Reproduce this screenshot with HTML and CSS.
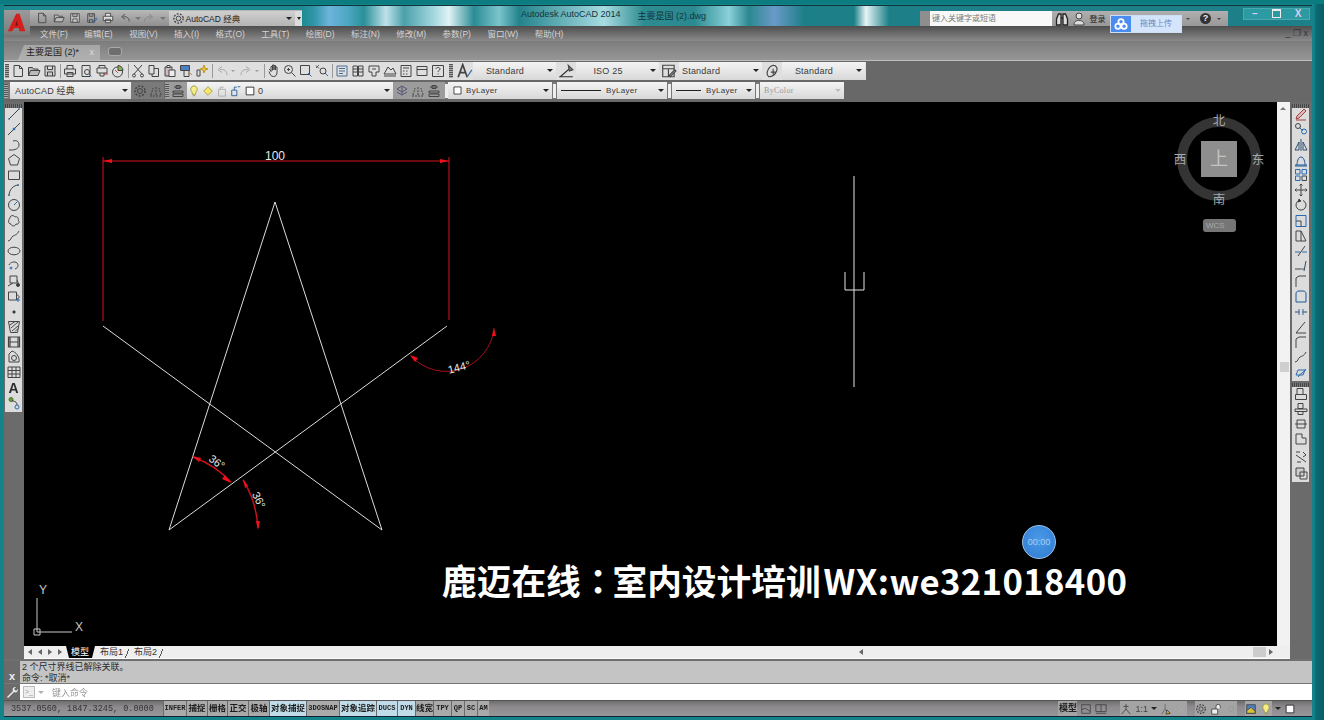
FILE: index.html
```html
<!DOCTYPE html>
<html lang="zh-CN">
<head>
    <meta charset="UTF-8">
    <title>AutoCAD 2014</title>
    <link rel="stylesheet" href="styles.css">
</head>
<body>
    <svg class="sprite" width="0" height="0">
        <defs>
            <symbol id="new" viewBox="0 0 14 14"><path d="M3 1.500h5.500l3 3v8h-8.500z M8.500 1.500v3h3"/></symbol>
            <symbol id="open" viewBox="0 0 14 14"><path d="M1.500 11.500v-8h4l1 1.500h4.500v1.500 M1.500 11.500l2-5h9.500l-2 5z" fill="#bbb"/></symbol>
            <symbol id="save" viewBox="0 0 14 14"><path d="M2 2h10v10h-10z M4.500 2v3.500h5v-3.500 M4.500 12v-4h5v4" fill="#ccc"/></symbol>
            <symbol id="saveas" viewBox="0 0 14 14"><path d="M2 2h8v10h-8z M4 2v3h4v-3 M4 12v-3h4v3"/><path d="M8 11l4-4 1 1-4 4z" stroke="#2a6ab0"/></symbol>
            <symbol id="print" viewBox="0 0 14 14"><path d="M4 5v-3.500h6v3.500 M1.500 5h11v5h-11z M4 8.500h6v4h-6z" fill="#ddd"/></symbol>
            <symbol id="preview" viewBox="0 0 14 14"><path d="M3 1.500h8v11h-8z"/><circle cx="8" cy="8" r="2.500"/><path d="M10 10l2.500 2.500" stroke="#2a6ab0"/></symbol>
            <symbol id="plot" viewBox="0 0 14 14"><path d="M4 4v-2.500h6v2.500 M2 4h10v5h-10z M5 9v3h4v-3"/><path d="M9 10h4" stroke="#b33"/></symbol>
            <symbol id="publish" viewBox="0 0 14 14"><circle cx="6.500" cy="8" r="5"/><path d="M7 1.500a5 5 0 0 1 5 5h-5z" fill="#8db04a"/><path d="M4 6l3 3" stroke="#c44"/></symbol>
            <symbol id="cut" viewBox="0 0 14 14"><path d="M3 1l8 9 M11 1l-8 9"/><circle cx="3" cy="11.500" r="1.500"/><circle cx="11" cy="11.500" r="1.500"/></symbol>
            <symbol id="copy" viewBox="0 0 14 14"><path d="M2 1.500h5v8.500h-5z M7 4.500h4.500v8h-6.500v-2.500"/></symbol>
            <symbol id="paste" viewBox="0 0 14 14"><path d="M2 3h7v9h-7z" fill="#cbb"/><path d="M4 1.500h3v2h-3z M6 6h6v6.500h-6z" fill="#eee"/></symbol>
            <symbol id="match" viewBox="0 0 14 14"><path d="M1.500 1.500h9v5h-9z" fill="#4a7fc0"/><path d="M5 6.500h5v6h-5z" fill="#ddd"/><path d="M10 8l3 3" stroke="#d48a1c"/></symbol>
            <symbol id="spark" viewBox="0 0 14 14"><path d="M2 6v6h3v-6z"/><path d="M9 1l1 3 3 1-3 1-1 3-1-3-3-1 3-1z" fill="#e8c23a" stroke="#c09a20"/></symbol>
            <symbol id="undo" viewBox="0 0 14 14"><path d="M12 11c0-4-3-6-7-5.500 M7 2.500l-4 3 4 3"/></symbol>
            <symbol id="redo" viewBox="0 0 14 14"><path d="M2 11c0-4 3-6 7-5.500 M7 2.500l4 3-4 3"/></symbol>
            <symbol id="hand" viewBox="0 0 14 14"><path d="M4 7l-2-2 M4 8v-5.500h1.500v4 M5.500 6v-5h1.500v5 M7 6v-4.500h1.500v4.500 M8.500 6v-3h1.500v5c0 3-1 4.500-3.500 4.500s-3-1.500-4.500-5"/></symbol>
            <symbol id="zoom" viewBox="0 0 14 14"><circle cx="5.500" cy="5.500" r="4"/><path d="M8.500 8.500l4 4 M4 5.500h3 M5.500 4v3"/></symbol>
            <symbol id="zoomwin" viewBox="0 0 14 14"><path d="M1.500 1.500h9v9h-9z"/><path d="M9 9l3.500 3.500" stroke="#2a6ab0"/></symbol>
            <symbol id="zoomprev" viewBox="0 0 14 14"><path d="M1 4l3-3 M1 1.500l3 3" stroke="#555"/><circle cx="8" cy="7" r="3"/><path d="M10 9l3 3" stroke="#2a6ab0"/></symbol>
            <symbol id="props" viewBox="0 0 14 14"><path d="M2 2h10v10h-10z M4 4.500h6 M4 7h6 M4 9.500h4" stroke="#4a6f90"/></symbol>
            <symbol id="grid2" viewBox="0 0 14 14"><path d="M2 2h4.500v10h-4.500z M7.500 2h4.500v10h-4.500z M2 5h4.500 M2 8h4.500 M7.500 5h4.500 M7.500 8h4.500"/></symbol>
            <symbol id="palette" viewBox="0 0 14 14"><path d="M2 2h10v6h-3v4h-4v-4h-3z M5 5h4"/></symbol>
            <symbol id="sheet" viewBox="0 0 14 14"><path d="M1 10l4-7 3 3 2-2 3 6z" fill="#ddd"/><path d="M1 12h12"/></symbol>
            <symbol id="calc" viewBox="0 0 14 14"><path d="M2 1.500h10v11h-10z M4 4h6 M4 7h1.500 M7 7h1.500 M4 10h1.500 M7 10h1.500"/></symbol>
            <symbol id="box" viewBox="0 0 14 14"><path d="M2 2.500h10v9h-10z M2 5.500h10"/></symbol>
            <symbol id="help" viewBox="0 0 14 14"><path d="M1.500 1.500h11v11h-11z M5 5c0-2 4-2 4 0 0 1.500-2 1.500-2 3 M7 9.500v1"/></symbol>
            <symbol id="textstyle" viewBox="0 0 14 14"><path d="M1 12.500l4-11 4 11 M2.500 8.500h5" stroke-width="1.500"/><path d="M9 12l4-6" stroke="#2a6ab0"/></symbol>
            <symbol id="dimstyle" viewBox="0 0 14 14"><path d="M1 12h12 M2 12l8-7" stroke="#333"/><path d="M9 2l4 4-3 1z" fill="#888"/></symbol>
            <symbol id="tablestyle" viewBox="0 0 14 14"><path d="M1.500 2h10v10h-10z M1.500 5h10 M6.500 5v7"/><path d="M7 11l5-5 1 1-5 5z" fill="#ddd"/></symbol>
            <symbol id="mlstyle" viewBox="0 0 14 14"><path d="M4 12c-3-3 0-9 4-10 3 0 4 3 3 5-1 3-4 5-7 5z M8 5v5 M6 8h4"/></symbol>
            <symbol id="gear" viewBox="0 0 14 14"><circle cx="7" cy="7" r="2.500"/><circle cx="7" cy="7" r="5" stroke-dasharray="2 1.500" stroke-width="1.500"/></symbol>
            <symbol id="wsp" viewBox="0 0 14 14"><path d="M2 11c0-3 2-4 2-7 M7 11c0-3 0-5 0-8 M12 11c0-3-2-4-2-7 M1 12h12" stroke-dasharray="2 1"/></symbol>
            <symbol id="laystate" viewBox="0 0 14 14"><path d="M3 3h8 M5 1.500h4v3h-4z M2 7h10v2h-10z M2 10h10v2.500h-10z"/></symbol>
            <symbol id="bulb" viewBox="0 0 14 14"><path d="M7 1a4 4 0 0 0-2.500 7l1 3h3l1-3a4 4 0 0 0-2.500-7z M5.500 12.500h3" fill="#f3ec88" stroke="#9a9a40"/></symbol>
            <symbol id="sun" viewBox="0 0 14 14"><path d="M7 2l5 5-5 5-5-5z" fill="#f3e66a" stroke="#a09a40"/></symbol>
            <symbol id="lockp" viewBox="0 0 14 14"><path d="M3 5h8v8h-8z M5 5v-2.500h4" stroke="#aaa"/></symbol>
            <symbol id="lineblue" viewBox="0 0 14 14"><path d="M2 6h6v6.500h-6z M5 6v-3.500h3 M9 2h3" stroke="#1c5a9a"/></symbol>
            <symbol id="square" viewBox="0 0 14 14"><path d="M2.500 2.500h9v9h-9z" fill="#fff" stroke="#222"/></symbol>
            <symbol id="layset" viewBox="0 0 14 14"><path d="M2 5l5-3 5 3-5 3z M2 8l5 3 5-3 M7 2v9" stroke="#557"/></symbol>
            <symbol id="line" viewBox="0 0 14 14"><path d="M2 12l10-10"/><path d="M2 11v2 M12 1v2" stroke="#2a6ab0"/></symbol>
            <symbol id="xline" viewBox="0 0 14 14"><path d="M1 13l12-12"/><circle cx="7" cy="7" r="1" fill="#2a6ab0" stroke="#2a6ab0"/></symbol>
            <symbol id="pline" viewBox="0 0 14 14"><path d="M2 12h3c2 0 7-1 7-5s-3-5-6-4"/></symbol>
            <symbol id="polygon" viewBox="0 0 14 14"><path d="M7 1.500l5.500 4-2 6.500h-7l-2-6.500z"/></symbol>
            <symbol id="rect" viewBox="0 0 14 14"><path d="M1.500 3h11v8.500h-11z"/></symbol>
            <symbol id="arc" viewBox="0 0 14 14"><path d="M2 13c0-6 4-11 10-11"/><path d="M1 12h2 M11 1v2" stroke="#2a6ab0"/></symbol>
            <symbol id="circle" viewBox="0 0 14 14"><circle cx="7" cy="7" r="5.500"/><path d="M7 7l3-3" stroke="#2a6ab0"/></symbol>
            <symbol id="cloud" viewBox="0 0 14 14"><path d="M3 4c0-3 4-3 5-1 2-1 4 1 3 3 2 1 1 5-2 4-1 3-5 2-5 0-3 0-3-4-1-6z"/></symbol>
            <symbol id="spline" viewBox="0 0 14 14"><path d="M1 12c3 0 3-4 5-5s4-1 6-5"/></symbol>
            <symbol id="ellipse" viewBox="0 0 14 14"><ellipse cx="7" cy="7" rx="6" ry="3.800"/></symbol>
            <symbol id="ellarc" viewBox="0 0 14 14"><path d="M2 6c1-3 6-4 8-2 2 2 1 5-2 6"/><circle cx="4" cy="9" r="1" stroke="#2a6ab0"/></symbol>
            <symbol id="insert" viewBox="0 0 14 14"><path d="M3 2h7v7h-7z M10 6l2 5 M1 12l5-3"/><circle cx="11" cy="11" r="1.500" fill="#333"/></symbol>
            <symbol id="block" viewBox="0 0 14 14"><path d="M1.500 3h8v8h-8z M9.500 5l3 3-3 3"/><circle cx="11" cy="11" r="1.200" stroke="#2a6ab0"/></symbol>
            <symbol id="point" viewBox="0 0 14 14"><path d="M6 6h2v2h-2z" fill="#333"/></symbol>
            <symbol id="hatch" viewBox="0 0 14 14"><path d="M1.500 1.500h11l-2 11h-7z M3 5l5-3.500 M4 8l7-6 M5 11l6-5 M8 11.500l3-3"/></symbol>
            <symbol id="gradient" viewBox="0 0 14 14"><path d="M1.500 2h11v10h-11z M3 2v10 M11 2v10 M3 7h8" stroke-width="1.200"/></symbol>
            <symbol id="region" viewBox="0 0 14 14"><path d="M2 12v-8l3-3c4 1 8 6 7 11z"/><circle cx="7" cy="8" r="2.500"/></symbol>
            <symbol id="table" viewBox="0 0 14 14"><path d="M1 2h12v10.500h-12z M1 5.500h12 M1 9h12 M5 2v10.500 M9 2v10.500"/></symbol>
            <symbol id="addsel" viewBox="0 0 14 14"><circle cx="4" cy="3.500" r="2" fill="#6a9a3a" stroke="#4a7a2a"/><path d="M5 5c4 0 5 2 5 4" stroke="#333"/><circle cx="10" cy="11" r="2" stroke="#2a6ab0"/></symbol>
            <symbol id="erase" viewBox="0 0 14 14"><path d="M2 12l1-3 7-7 2 2-7 7z" fill="#e0b8b8" stroke="#a04040"/><path d="M2 13h10" stroke="#a04040"/></symbol>
            <symbol id="mcopy" viewBox="0 0 14 14"><circle cx="4" cy="4" r="2.500"/><circle cx="10" cy="9.500" r="2.500" stroke="#2a6ab0"/><path d="M5 5l4 4" stroke="#2a6ab0"/></symbol>
            <symbol id="mirror" viewBox="0 0 14 14"><path d="M7 1v12 M5 4v8h-4z M9 4v8h4z" stroke="#2f4f70"/></symbol>
            <symbol id="offset" viewBox="0 0 14 14"><path d="M1 12h12 M3 12c0-3 1-8 4-8s4 5 4 8" stroke="#1c5a9a"/><path d="M1 13h12" stroke="#1c5a9a"/></symbol>
            <symbol id="array" viewBox="0 0 14 14"><path d="M1.500 1.500h4.500v4.500h-4.500z M8 1.500h4.500v4.500h-4.500z M1.500 8h4.500v4.500h-4.500z" stroke="#2a6ab0"/><path d="M8 8h4.500v4.500h-4.500z"/></symbol>
            <symbol id="move" viewBox="0 0 14 14"><path d="M7 1v12 M1 7h12 M5.500 2.500l1.500-1.500 1.500 1.500 M5.500 11.500l1.500 1.500 1.500-1.500 M2.500 5.500l-1.500 1.500 1.500 1.500 M11.500 5.500l1.500 1.500-1.500 1.500"/></symbol>
            <symbol id="rotate" viewBox="0 0 14 14"><path d="M9 2.500a5 5 0 1 1-4 0"/><path d="M5 1l2 2-3 1z" fill="#333"/></symbol>
            <symbol id="scale" viewBox="0 0 14 14"><path d="M2 1.500h10v11h-10z" stroke="#2a6ab0"/><path d="M2 7h5v5.500"/></symbol>
            <symbol id="stretch" viewBox="0 0 14 14"><path d="M2 2h5l5 10h-10z M7 2v10"/></symbol>
            <symbol id="trim" viewBox="0 0 14 14"><path d="M1 8h5 M8 8h5" stroke="#2a6ab0"/><path d="M11 2l-7 10"/></symbol>
            <symbol id="extend" viewBox="0 0 14 14"><path d="M1 10h6"/><path d="M7 10h3" stroke="#2a6ab0"/><path d="M12 2l-2 10"/></symbol>
            <symbol id="chamfer" viewBox="0 0 14 14"><path d="M2 13v-9l3-2h7"/></symbol>
            <symbol id="bcorner" viewBox="0 0 14 14"><path d="M2 13v-8c0-2 1-3 3-3h4c2 0 3 1 3 3v8h-10" stroke="#1c5a9a"/></symbol>
            <symbol id="breakp" viewBox="0 0 14 14"><path d="M1 7h4.500 M8.500 7h4.500"/><path d="M5 4v6 M9 4v6" stroke="#2a6ab0"/></symbol>
            <symbol id="fillet" viewBox="0 0 14 14"><path d="M2 13l9-11 M2 13h10"/></symbol>
            <symbol id="explode" viewBox="0 0 14 14"><path d="M2 10l2-5h7l-2 5z" stroke="#2a6ab0"/><path d="M4 12c2-4 6-4 8-8" stroke="#2a6ab0"/></symbol>
            <symbol id="draw1" viewBox="0 0 14 14"><path d="M3 1.500h6v6h-6z M1.500 7.500h11v5h-11z"/></symbol>
            <symbol id="draw2" viewBox="0 0 14 14"><path d="M4 1.500h5v5h-5z M1 7h12v2.500h-12z M4 9.500h5v3h-5z"/></symbol>
            <symbol id="draw3" viewBox="0 0 14 14"><path d="M1 7h12 M3 3h8v8h-8z"/></symbol>
            <symbol id="draw4" viewBox="0 0 14 14"><path d="M2 2h6v4h4v6h-10z" fill="#ddd"/></symbol>
            <symbol id="draw5" viewBox="0 0 14 14"><path d="M2 2h4 M2 5l10 7 M9 2l3 3-3 2 M3 12h4"/></symbol>
            <symbol id="draw6" viewBox="0 0 14 14"><path d="M2 2h8v8h-8z" fill="#ccc"/><path d="M6 6h7v7h-7z"/></symbol>
            <symbol id="binoc" viewBox="0 0 14 14"><path d="M1.500 13v-6l2-5h2.500v11z M12.500 13v-6l-2-5h-2.500v11z M6 6h2" fill="#ddd" stroke="#222" stroke-width="1.300"/></symbol>
            <symbol id="user" viewBox="0 0 14 14"><circle cx="7" cy="4" r="3" fill="#ddd"/><path d="M2 13c0-4 3-4.500 5-4.500s5 .5 5 4.500z" fill="#ddd"/></symbol>
            <symbol id="cloudlogo" viewBox="0 0 16 16"><circle cx="8" cy="5.500" r="3" stroke="#fff" stroke-width="2"/><circle cx="4.500" cy="10.500" r="3" stroke="#fff" stroke-width="2"/><circle cx="11.500" cy="10.500" r="3" stroke="#fff" stroke-width="2"/></symbol>
            <symbol id="pan" viewBox="0 0 14 14"><path d="M2 2h10v10h-10z M2 8l4-2 6 4"/></symbol>
            <symbol id="twopanes" viewBox="0 0 14 14"><path d="M1 2h12v8h-12z M7 2v8 M1 12h12"/></symbol>
            <symbol id="anno" viewBox="0 0 14 14"><path d="M7 1v6 M7 7l-5 6 M7 7l5 6 M4 4h6"/></symbol>
            <symbol id="annoon" viewBox="0 0 14 14"><path d="M6 1v6 M6 7l-4 6 M6 7l4 6" stroke="#666"/><path d="M8 8l4 4-5 1z" fill="#e0a030"/></symbol>
            <symbol id="annooff" viewBox="0 0 14 14"><path d="M3 3l8 8 M11 3l-8 8" stroke="#aaa"/></symbol>
            <symbol id="lockopen" viewBox="0 0 14 14"><path d="M2 7h7v6h-7z M7 7v-3a2.500 2.500 0 0 1 5 0v2" fill="#eee"/></symbol>
            <symbol id="dot" viewBox="0 0 14 14"><circle cx="7" cy="7" r="3" stroke="#999"/></symbol>
            <symbol id="hw" viewBox="0 0 14 14"><path d="M2 2h10v10h-10z" fill="#4a7fc0"/><path d="M2 9l5-4 5 5v2h-10z" fill="#d8c23a"/></symbol>
        </defs>
    </svg>

    <div class="app">
        <header class="titlebar">
            <div class="qat">
                <div class="app-btn">
                    <svg class="app-logo" viewBox="0 0 24 24"><path d="M11 1h4l7 21h-7l-1-4h-5l-3 4h-5z" fill="#d3201e"/><path d="M12 9l-2 6h3z" fill="#6e1210"/></svg>
                </div>
                <svg class="ico"><use href="#new"/></svg>
                <svg class="ico"><use href="#open"/></svg>
                <svg class="ico"><use href="#save"/></svg>
                <svg class="ico"><use href="#saveas"/></svg>
                <svg class="ico"><use href="#print"/></svg>
                <svg class="ico"><use href="#undo"/></svg>
                <i class="caret faint"></i>
                <svg class="ico faint"><use href="#redo"/></svg>
                <i class="caret faint"></i>
                <div class="ws-combo">
                    <svg class="ico"><use href="#gear"/></svg>
                    <span class="ws-name">AutoCAD 经典</span>
                    <i class="caret"></i>
                </div>
                <div class="qat-more"><i class="caret"></i></div>
            </div>
            <div class="doc-title">
                <span>Autodesk AutoCAD 2014</span>
                <span>主要是国 (2).dwg</span>
            </div>
            <div class="infocenter">
                <div class="search-arrow"></div>
                <div class="search-box">键入关键字或短语</div>
                <svg class="ico"><use href="#binoc"/></svg>
                <svg class="ico"><use href="#user"/></svg>
                <span class="login">登录</span>
                <i class="caret"></i>
                <div class="help-btn">?</div>
                <i class="caret"></i>
            </div>
            <div class="win-btns">
                <span class="win-btn">&#8211;</span>
                <span class="win-btn restore"></span>
                <span class="win-btn">X</span>
            </div>
        </header>

        <nav class="menubar">
            <span>文件(F)</span><span>编辑(E)</span><span>视图(V)</span><span>插入(I)</span>
            <span>格式(O)</span><span>工具(T)</span><span>绘图(D)</span><span>标注(N)</span>
            <span>修改(M)</span><span>参数(P)</span><span>窗口(W)</span><span>帮助(H)</span>
            <div class="doc-btns">_ &#10064; x</div>
        </nav>

        <div class="tabbar">
            <div class="doc-tab">主要是国 (2)*<span class="tab-x">x</span></div>
            <div class="new-tab"></div>
        </div>

        <div class="toolbars">
            <div class="tool-row">
                <div class="toolbar standard">
                    <i class="grip"></i>
                    <svg class="ico"><use href="#new"/></svg>
                    <svg class="ico"><use href="#open"/></svg>
                    <svg class="ico"><use href="#save"/></svg>
                    <i class="sep"></i>
                    <svg class="ico"><use href="#print"/></svg>
                    <svg class="ico"><use href="#preview"/></svg>
                    <svg class="ico"><use href="#plot"/></svg>
                    <svg class="ico"><use href="#publish"/></svg>
                    <i class="sep"></i>
                    <svg class="ico"><use href="#cut"/></svg>
                    <svg class="ico"><use href="#copy"/></svg>
                    <svg class="ico"><use href="#paste"/></svg>
                    <svg class="ico"><use href="#match"/></svg>
                    <svg class="ico"><use href="#spark"/></svg>
                    <i class="sep"></i>
                    <svg class="ico faint"><use href="#undo"/></svg>
                    <i class="caret faint"></i>
                    <svg class="ico faint"><use href="#redo"/></svg>
                    <i class="caret faint"></i>
                    <i class="sep"></i>
                    <svg class="ico"><use href="#hand"/></svg>
                    <svg class="ico"><use href="#zoom"/></svg>
                    <svg class="ico"><use href="#zoomwin"/></svg>
                    <svg class="ico"><use href="#zoomprev"/></svg>
                    <i class="sep"></i>
                    <svg class="ico"><use href="#props"/></svg>
                    <svg class="ico"><use href="#grid2"/></svg>
                    <svg class="ico"><use href="#palette"/></svg>
                    <svg class="ico"><use href="#sheet"/></svg>
                    <svg class="ico"><use href="#calc"/></svg>
                    <svg class="ico"><use href="#box"/></svg>
                    <svg class="ico"><use href="#help"/></svg>
                </div>
                <div class="toolbar styles">
                    <i class="grip"></i>
                    <svg class="ico wide"><use href="#textstyle"/></svg>
                    <div class="combo centered w83">Standard<i class="caret"></i></div>
                    <svg class="ico wide"><use href="#dimstyle"/></svg>
                    <div class="combo centered w83">ISO 25<i class="caret"></i></div>
                    <svg class="ico wide"><use href="#tablestyle"/></svg>
                    <div class="combo w83">Standard<i class="caret"></i></div>
                    <svg class="ico wide"><use href="#mlstyle"/></svg>
                    <div class="combo centered w83">Standard<i class="caret"></i></div>
                </div>
            </div>
            <div class="tool-row second">
                <div class="toolbar ws-bar">
                    <i class="grip"></i>
                    <div class="combo ws-select">AutoCAD 经典<i class="caret"></i></div>
                    <svg class="ico"><use href="#gear"/></svg>
                    <svg class="ico"><use href="#wsp"/></svg>
                </div>
                <div class="toolbar layers">
                    <i class="grip"></i>
                    <svg class="ico"><use href="#laystate"/></svg>
                    <div class="combo layer-select">
                        <svg class="ico"><use href="#bulb"/></svg>
                        <svg class="ico"><use href="#sun"/></svg>
                        <svg class="ico"><use href="#lockp"/></svg>
                        <svg class="ico"><use href="#lineblue"/></svg>
                        <svg class="ico"><use href="#square"/></svg>
                        <span>0</span>
                        <i class="caret"></i>
                    </div>
                    <svg class="ico"><use href="#layset"/></svg>
                    <svg class="ico"><use href="#wsp"/></svg>
                    <svg class="ico"><use href="#laystate"/></svg>
                </div>
                <div class="toolbar props-bar">
                    <i class="grip"></i>
                    <div class="combo w104"><svg class="ico"><use href="#square"/></svg>ByLayer<i class="caret"></i></div>
                    <i class="grip"></i>
                    <div class="combo w110"><i class="ltype long"></i>ByLayer<i class="caret"></i></div>
                    <i class="grip"></i>
                    <div class="combo w83"><i class="ltype"></i>ByLayer<i class="caret"></i></div>
                    <i class="grip"></i>
                    <div class="combo w84 disabled">ByColor<i class="caret"></i></div>
                </div>
            </div>
        </div>

        <main class="workspace">
            <aside class="rail">
                <div class="vbar">
                    <i class="grip-h"></i>
                    <svg class="ico"><use href="#line"/></svg>
                    <svg class="ico"><use href="#xline"/></svg>
                    <svg class="ico"><use href="#pline"/></svg>
                    <svg class="ico"><use href="#polygon"/></svg>
                    <svg class="ico"><use href="#rect"/></svg>
                    <svg class="ico"><use href="#arc"/></svg>
                    <svg class="ico"><use href="#circle"/></svg>
                    <svg class="ico"><use href="#cloud"/></svg>
                    <svg class="ico"><use href="#spline"/></svg>
                    <svg class="ico"><use href="#ellipse"/></svg>
                    <svg class="ico"><use href="#ellarc"/></svg>
                    <svg class="ico"><use href="#insert"/></svg>
                    <svg class="ico"><use href="#block"/></svg>
                    <svg class="ico"><use href="#point"/></svg>
                    <svg class="ico"><use href="#hatch"/></svg>
                    <svg class="ico"><use href="#gradient"/></svg>
                    <svg class="ico"><use href="#region"/></svg>
                    <svg class="ico"><use href="#table"/></svg>
                    <span class="a-tool">A</span>
                    <svg class="ico"><use href="#addsel"/></svg>
                </div>
            </aside>

            <section class="center">
                <div class="view-row">
                    <div class="canvas">
                        <svg class="drawing" viewBox="24 102 1253 544">
                            <g class="dim">
                                <path d="M103 157V321 M449 157V320 M103 161H449"/>
                                <path d="M103 161l9-2v4z M449 161l-9-2v4z" class="dim-head"/>
                            </g>
                            <text x="275" y="160" class="label" text-anchor="middle">100</text>

                            <path class="star" d="M275 202L169 530 M275 202L382 530 M103 326L382 530 M447 326L169 530"/>

                            <path class="dim-arc" d="M411 356A48 48 0 0 0 494 328"/>
                            <path class="dim-head" d="M410 355l8 3-3 4z M494 328l-2 8 4 0z"/>
                            <text x="459" y="371" class="label small" text-anchor="middle" transform="rotate(-14 459 367)">144°</text>

                            <path class="dim-arc bright" d="M193 457Q215 465 231 482 M243 480Q256 500 258 528"/>
                            <path class="dim-head" d="M192 456l9 2-2 4z M231 483l-6-8-3 4z M243 479l2 9 3-2z M258 530l-2-9 4 0z"/>
                            <text x="217" y="466" class="label small" text-anchor="middle" transform="rotate(36 217 462)">36°</text>
                            <text x="259" y="504" class="label small" text-anchor="middle" transform="rotate(64 259 500)">36°</text>

                            <path class="cursor" d="M854 176V387 M845 272V290H864V272"/>

                            <circle class="ring" cx="1219" cy="159" r="37"/>
                            <rect class="cube" x="1201" y="141" width="36" height="36"/>
                            <text x="1219" y="165" class="cube-face" text-anchor="middle">上</text>
                            <text x="1219" y="125" class="compass" text-anchor="middle">北</text>
                            <text x="1219" y="204" class="compass" text-anchor="middle">南</text>
                            <text x="1180" y="164" class="compass" text-anchor="middle">西</text>
                            <text x="1258" y="164" class="compass" text-anchor="middle">东</text>
                            <rect class="wcs" x="1203" y="219" width="33" height="13" rx="3"/>
                            <text x="1206" y="228" class="wcs-text">WCS</text>

                            <path class="ucs" d="M37 598V632H72 M34 629h6v6h-6z"/>
                            <text x="39" y="594" class="ucs-text">Y</text>
                            <text x="75" y="631" class="ucs-text">X</text>
                        </svg>
                        <div class="timer">00:00</div>
                        <div class="watermark">鹿迈在线<span class="wm-colon" lang="zh-TW">：</span>室内设计培训<span class="wm-latin">WX:we321018400</span></div>
                    </div>
                    <div class="vscroll">
                        <span class="up-arrow"></span>
                        <span class="vthumb"></span>
                    </div>
                </div>
                <div class="layout-tabs">
                    <div class="tab-nav">
                        <i class="nav first"></i><i class="nav prev"></i><i class="nav next"></i><i class="nav last"></i>
                    </div>
                    <span class="layout-tab active">模型</span>
                    <span class="layout-tab">布局1</span>
                    <span class="layout-tab">布局2</span>
                    <div class="hscroll">
                        <i class="nav prev"></i>
                        <span class="hthumb"></span>
                        <i class="nav next"></i>
                    </div>
                </div>
            </section>

            <aside class="rail right">
                <div class="vbar">
                    <i class="grip-h"></i>
                    <svg class="ico"><use href="#erase"/></svg>
                    <svg class="ico"><use href="#mcopy"/></svg>
                    <svg class="ico"><use href="#mirror"/></svg>
                    <svg class="ico"><use href="#offset"/></svg>
                    <svg class="ico"><use href="#array"/></svg>
                    <svg class="ico"><use href="#move"/></svg>
                    <svg class="ico"><use href="#rotate"/></svg>
                    <svg class="ico"><use href="#scale"/></svg>
                    <svg class="ico"><use href="#stretch"/></svg>
                    <svg class="ico"><use href="#trim"/></svg>
                    <svg class="ico"><use href="#extend"/></svg>
                    <svg class="ico"><use href="#chamfer"/></svg>
                    <svg class="ico"><use href="#bcorner"/></svg>
                    <svg class="ico"><use href="#breakp"/></svg>
                    <svg class="ico"><use href="#fillet"/></svg>
                    <svg class="ico"><use href="#chamfer"/></svg>
                    <svg class="ico"><use href="#spline"/></svg>
                    <svg class="ico"><use href="#explode"/></svg>
                </div>
                <div class="vbar second">
                    <i class="grip-h"></i>
                    <svg class="ico"><use href="#draw1"/></svg>
                    <svg class="ico"><use href="#draw2"/></svg>
                    <svg class="ico"><use href="#draw3"/></svg>
                    <svg class="ico"><use href="#draw4"/></svg>
                    <svg class="ico spaced"><use href="#draw5"/></svg>
                    <svg class="ico"><use href="#draw6"/></svg>
                </div>
            </aside>
        </main>

        <div class="command">
            <div class="cmd-rail"><span>x</span></div>
            <div class="cmd-log">
                <div>2 个尺寸界线已解除关联。</div>
                <div>命令: *取消*</div>
            </div>
        </div>
        <div class="cmd-input">
            <div class="cmd-rail wrench">
                <svg class="ico"><path d="M2 12l6-6c-1-2 0-4 3-4l-2 2 2 2 2-2c0 3-2 4-4 3l-6 6z" fill="#eee" stroke="none"/></svg>
            </div>
            <span class="prompt-icon">&gt;_</span>
            <i class="caret faint"></i>
            <span class="prompt">键入命令</span>
        </div>

        <footer class="statusbar">
            <span class="coords">3537.0560, 1847.3245, 0.0000</span>
            <div class="toggles">
                <span class="toggle latin w23">INFER</span>
                <span class="toggle w21">捕捉</span>
                <span class="toggle w20">栅格</span>
                <span class="toggle w21">正交</span>
                <span class="toggle w21">极轴</span>
                <span class="toggle on w37">对象捕捉</span>
                <span class="toggle latin w33">3DOSNAP</span>
                <span class="toggle on w37">对象追踪</span>
                <span class="toggle on latin w21">DUCS</span>
                <span class="toggle on latin w18">DYN</span>
                <span class="toggle w18">线宽</span>
                <span class="toggle latin w18">TPY</span>
                <span class="toggle latin w13">QP</span>
                <span class="toggle latin w13">SC</span>
                <span class="toggle latin w12">AM</span>
            </div>
            <div class="status-tools">
                <span class="model-btn">模型</span>
                <svg class="ico"><use href="#pan"/></svg>
                <svg class="ico"><use href="#twopanes"/></svg>
                <div class="anno-group first">
                    <svg class="ico"><use href="#anno"/></svg>
                    <span class="scale">1:1</span>
                    <i class="caret"></i>
                    <svg class="ico"><use href="#annoon"/></svg>
                    <svg class="ico"><use href="#annooff"/></svg>
                </div>
                <div class="anno-group">
                    <svg class="ico"><use href="#gear"/></svg>
                    <svg class="ico"><use href="#lockopen"/></svg>
                    <svg class="ico"><use href="#dot"/></svg>
                </div>
                <div class="anno-group">
                    <svg class="ico"><use href="#hw"/></svg>
                    <svg class="ico"><use href="#bulb"/></svg>
                </div>
                <i class="caret"></i>
                <svg class="ico"><use href="#square"/></svg>
            </div>
        </footer>
    </div>

    <div class="baidu-pop">
        <div class="baidu-icon"><svg class="logo16"><use href="#cloudlogo"/></svg></div>
        <span>拖拽上传</span>
    </div>
</body>
</html>
```

FILE: styles.css
```css
* {
    margin: 0;
    padding: 0;
    box-sizing: border-box;
}

html, body {
    width: 1324px;
    height: 720px;
    overflow: hidden;
}

body {
    font-family: 'Liberation Sans', 'Noto Sans CJK SC', sans-serif;
    background: linear-gradient(90deg, #13858a 0, #13858a 1314px, #0c6a72 1316px, #0b5c68 100%);
    padding: 5px 12px 0 4px;
    position: relative;
    box-shadow: inset 0 4px 0 #0d7c80;
}

.sprite {
    position: absolute;
}

.app {
    display: flex;
    flex-direction: column;
    width: 1308px;
    height: 712px;
    filter: blur(0.45px);
}

/* generic icon */
.ico {
    width: 14px;
    height: 14px;
    flex: none;
    fill: none;
    stroke: #444;
    stroke-width: 1;
    color: #444;
}

.faint {
    opacity: 0.35;
}

.caret {
    display: inline-block;
    flex: none;
    width: 0;
    height: 0;
    border-left: 3px solid transparent;
    border-right: 3px solid transparent;
    border-top: 3px solid #222;
}

/* title bar */
.titlebar {
    height: 21px;
    display: flex;
    align-items: flex-start;
    position: relative;
    background: linear-gradient(90deg,
        #1d8a92 298px, #2f96a8 310px, #6db4dc 325px, #4aa6c0 345px, #2a9098 360px,
        #bfe2ea 382px, #4aa0aa 400px, #a5d8e0 430px, #e0f2f4 445px, #2a8c94 470px,
        #7cc4cc 495px, #23838c 515px, #a8dce2 600px, #2d8c90 640px, #2a8a90 690px,
        #8ad0d8 725px, #2a8890 745px, #6a9ac8 770px, #1d7f88 800px, #1d7f88 850px,
        #e6f4f6 862px, #1d8088 885px, #1d8088 100%);
    border-top: 1px solid #10333a;
}

.qat {
    width: 298px;
    height: 16px;
    margin-top: 4px;
    display: flex;
    align-items: center;
    gap: 2px;
    background: linear-gradient(#b8b8b8, #8f8f8f);
}

.app-btn {
    width: 26px;
    height: 25px;
    flex: none;
    align-self: flex-start;
    margin-right: 4px;
    background: linear-gradient(#9a9a9a, #7c7c7c);
    display: flex;
    align-items: center;
    justify-content: center;
    position: relative;
    z-index: 2;
}

.app-logo {
    width: 20px;
    height: 20px;
}

.qat > .ico {
    width: 12px;
    height: 12px;
    margin-right: 2.500px;
}

.ws-combo {
    width: 127px;
    height: 15px;
    margin-left: 1px;
    display: flex;
    align-items: center;
    padding: 0 3px;
    background: linear-gradient(#d0d0d0, #b4b4b4);
    font-size: 8.500px;
    color: #222;
}

.ws-combo .ico {
    width: 13px;
    height: 13px;
    margin-right: 1px;
}

.ws-name {
    flex: 1;
}

.qat-more {
    width: 7px;
    height: 15px;
    margin-left: -2px;
    background: #dcdcdc;
    display: flex;
    align-items: center;
    justify-content: center;
}

.qat-more .caret {
    border-left-width: 2px;
    border-right-width: 2px;
}

.doc-title {
    position: absolute;
    left: 517px;
    top: 3px;
    display: flex;
    gap: 17px;
    font-size: 9px;
    color: #12343c;
}

.infocenter {
    position: absolute;
    left: 916px;
    top: 5px;
    width: 308px;
    height: 15px;
    display: flex;
    align-items: center;
    gap: 3px;
    background: linear-gradient(#b0b0b0, #989898);
}

.search-arrow {
    width: 10px;
    height: 100%;
    margin-right: -3px;
    background: #8e8e8e;
}

.search-box {
    width: 123px;
    height: 100%;
    background: #f8f8f8;
    color: #777;
    font-size: 8px;
    line-height: 15px;
    padding-left: 2px;
}

.login {
    font-size: 8px;
    color: #222;
    width: 94px;
}

.infocenter .caret {
    border-width: 2px 2px 0;
    border-top-color: #444;
    margin-right: 7px;
}

.help-btn {
    width: 11px;
    height: 11px;
    background: #333;
    color: #eee;
    font-size: 9px;
    font-weight: bold;
    text-align: center;
    line-height: 11px;
    border-radius: 50%;
    margin-right: 3px;
}

.win-btns {
    position: absolute;
    left: 1239px;
    top: 2px;
    width: 67px;
    height: 12px;
    display: flex;
    background: #2b9aa2;
    border: 1px solid #4aa8ae;
}

.win-btn {
    flex: 1;
    text-align: center;
    font-size: 10px;
    line-height: 10px;
    font-weight: bold;
    color: #dce;
}

.win-btn.restore::before {
    content: '';
    display: inline-block;
    width: 7px;
    height: 6px;
    border: 1px solid #eee;
    border-top-width: 2px;
}

/* menu */
.menubar {
    height: 15px;
    padding-left: 36px;
    padding-bottom: 2px;
    display: flex;
    align-items: center;
    gap: 16.500px;
    font-size: 8.500px;
    color: #d4d4d4;
    background: linear-gradient(#4e4e4e, #8a8a8a);
}

.doc-btns {
    margin-left: auto;
    margin-right: 4px;
    font-size: 9px;
    color: #333;
}

.tabbar {
    height: 20px;
    padding-left: 14px;
    display: flex;
    align-items: flex-end;
    gap: 8px;
    background: linear-gradient(#7c7c7c, #969696);
    border-bottom: 1px solid #bdbdbd;
}

.doc-tab {
    width: 82px;
    height: 15px;
    padding-left: 8px;
    font-size: 9px;
    line-height: 15px;
    color: #1c1c1c;
    background: linear-gradient(#a6a6a6, #b0b0b0);
    clip-path: polygon(6px 0, 100% 0, 100% 100%, 0 100%);
    display: flex;
    justify-content: space-between;
}

.tab-x {
    color: #ddd;
    margin-right: 6px;
}

.new-tab {
    width: 14px;
    height: 9px;
    margin-bottom: 4px;
    border-radius: 3px;
    background: #6e6e6e;
    border: 1px solid #aaa;
}

/* toolbars */
.toolbars {
    height: 41px;
    padding-top: 1px;
    background: #686868;
}

.tool-row {
    height: 18px;
    display: flex;
    margin-bottom: 2px;
}

.toolbar {
    display: flex;
    align-items: center;
    height: 100%;
    flex: none;
    background: #dfdfdf;
}

.toolbar .ico {
    margin-right: 2px;
}

.standard {
    width: 445px;
    padding-left: 1px;
}

.standard .sep {
    width: 1px;
    height: 14px;
    background: #999;
    margin: 0 2px 0 1px;
}

.standard .caret {
    margin-right: 4px;
    border-width: 2px 2px 0;
}

.styles {
    width: 417px;
}

.styles .grip {
    margin: 0 4px 0 0;
}

.styles .ico.wide {
    width: 16px;
    height: 16px;
    margin: 0 2px;
}

.styles .ico.wide:first-of-type {
    margin-left: 0;
    margin-right: 0;
}

.grip {
    flex: none;
    width: 4px;
    height: 14px;
    margin: 0 2px 0 0;
    background: repeating-linear-gradient(#555 0 1px, #aaa 1px 2px);
}

.combo {
    height: 100%;
    display: flex;
    align-items: center;
    position: relative;
    font-size: 9px;
    letter-spacing: 0.2px;
    color: #3a3a3a;
    background: linear-gradient(#f4f4f4, #d8d8d8);
    padding-left: 3px;
    padding-right: 14px;
    flex: none;
}

.combo > .caret {
    position: absolute;
    right: 3px;
    top: 7px;
}

.combo.centered {
    justify-content: center;
    padding-right: 22px;
}

.w83 {
    width: 83px;
}

.w104 {
    width: 104px;
}

.w110 {
    width: 110px;
}

.w84 {
    width: 84px;
}

.combo.disabled {
    color: #999;
    font-family: 'Liberation Serif', serif;
}

.combo.disabled .caret {
    border-top-color: #bbb;
}

.ltype {
    width: 40px;
    height: 1px;
    background: #222;
    margin-right: 5px;
    flex: none;
}

.ltype:not(.long) {
    width: 25px;
}

.second .toolbar {
    height: 17px;
}

.ws-bar {
    width: 160px;
    background: #7a7a7a;
}

.ws-select {
    width: 121px;
    margin-right: 2px;
    padding-left: 5px;
}

.layers {
    width: 280px;
    margin-left: 1px;
    background: #9c9c9c;
}

.layer-select {
    width: 206px;
    padding-left: 1px;
    margin-right: 2px;
}

.layer-select .ico {
    width: 12px;
    height: 12px;
    margin-right: 2px;
}

.props-bar {
    background: #777;
}

.props-bar .combo {
    font-size: 8px;
    letter-spacing: 0.3px;
    padding-left: 4px;
}

.props-bar .ico {
    width: 11px;
    height: 11px;
    margin-right: 3px;
}

.props-bar .grip {
    margin: 0 1px 0 1px;
    width: 3px;
    background: #eee;
}

.props-bar .grip:first-child {
    margin: 0;
}

/* main area */
.workspace {
    height: 557px;
    display: flex;
}

.rail {
    width: 20px;
    flex: none;
    background: #6b6b6b;
    padding: 2px 0 0 1px;
}

.rail.right {
    width: 22px;
    padding-left: 2px;
}

.vbar {
    width: 17px;
    display: flex;
    flex-direction: column;
    align-items: center;
    gap: 1.200px;
    background: #dcdcdc;
    padding-bottom: 2px;
}

.vbar.second {
    margin-top: 2px;
}

.spaced {
    margin-top: 3px;
}

.grip-h {
    width: 100%;
    height: 4px;
    margin-bottom: -2px;
    background: repeating-linear-gradient(90deg, #444 0 1px, #777 1px 2px);
}

.a-tool {
    height: 14px;
    font-size: 14px;
    font-weight: bold;
    line-height: 14px;
    color: #2c2c2c;
}

.center {
    width: 1266px;
    flex: none;
    display: flex;
    flex-direction: column;
}

.view-row {
    height: 544px;
    display: flex;
}

.canvas {
    width: 1253px;
    flex: none;
    position: relative;
    background: #000;
    overflow: hidden;
}

.drawing {
    position: absolute;
    left: 0;
    top: 0;
    width: 1253px;
    height: 544px;
}

.dim path {
    fill: none;
    stroke: #d4141c;
    stroke-width: 1;
}

.dim .dim-head,
.dim-head {
    fill: #f0101c;
    stroke: none;
}

.star {
    fill: none;
    stroke: #dcdcdc;
    stroke-width: 1;
}

.dim-arc {
    fill: none;
    stroke: #a8101c;
    stroke-width: 1;
}

.dim-arc.bright {
    stroke: #c8101c;
    stroke-width: 1.500;
}

.label {
    font-size: 12px;
    fill: #e8e8e8;
}

.label.small {
    font-size: 11px;
}

.cursor {
    fill: none;
    stroke: #e4e4e4;
    stroke-width: 1;
}

.ring {
    fill: none;
    stroke: #343434;
    stroke-width: 10;
}

.cube {
    fill: #8e8e8e;
}

.cube-face {
    font-size: 18px;
    fill: #c4c4c4;
}

.compass {
    font-size: 12.500px;
    fill: #a8a8a8;
}

.wcs {
    fill: #767676;
}

.wcs-text {
    font-size: 8px;
    fill: #a8a8a8;
}

.ucs {
    fill: none;
    stroke: #c8c8c8;
    stroke-width: 1;
}

.ucs-text {
    font-size: 12px;
    fill: #c8c8c8;
}

.timer {
    position: absolute;
    left: 998px;
    top: 423px;
    width: 34px;
    height: 34px;
    border-radius: 50%;
    border: 1px solid #9cc4ec;
    background: radial-gradient(circle at 50% 40%, #4a9ae8, #2f7ad0);
    color: #a8d0f4;
    font-size: 9px;
    line-height: 32px;
    text-align: center;
}

.watermark {
    position: absolute;
    left: 418px;
    top: 454px;
    font-family: 'Noto Sans CJK SC', sans-serif;
    font-weight: 700;
    font-size: 34.700px;
    line-height: 48px;
    color: #fff;
    white-space: nowrap;
}

.wm-colon {
    font-family: 'Noto Sans CJK TC', sans-serif;
    letter-spacing: -3px;
}

.wm-latin {
    margin-left: 3px;
    letter-spacing: 0.350px;
}

.vscroll {
    width: 13px;
    flex: none;
    background: #f2f2f2;
    position: relative;
}

.up-arrow {
    position: absolute;
    left: 3px;
    top: 5px;
    width: 0;
    height: 0;
    border-left: 3px solid transparent;
    border-right: 3px solid transparent;
    border-bottom: 3px solid #777;
}

.vthumb {
    position: absolute;
    left: 3px;
    top: 260px;
    width: 9px;
    height: 10px;
    background: #cfcfcf;
}

.layout-tabs {
    height: 13px;
    display: flex;
    align-items: stretch;
    background: #efefef;
    border-bottom: 1px solid #fff;
    font-size: 9px;
    color: #333;
}

.tab-nav {
    width: 42px;
    flex: none;
    display: flex;
    align-items: center;
    justify-content: space-around;
    padding: 0 1px;
}

.nav {
    width: 0;
    height: 0;
    border-top: 3px solid transparent;
    border-bottom: 3px solid transparent;
    flex: none;
}

.nav.prev, .nav.first {
    border-right: 4px solid #666;
}

.nav.next, .nav.last {
    border-left: 4px solid #666;
}

.layout-tab {
    padding: 0 6px 0 5px;
    line-height: 12px;
    background: linear-gradient(112deg, transparent calc(100% - 4px), #555 calc(100% - 4px), #555 calc(100% - 3px), transparent calc(100% - 3px));
}

.layout-tab.active {
    background: #000;
    color: #fff;
    clip-path: polygon(0 0, 100% 0, calc(100% - 3px) 100%, 3px 100%);
}

.hscroll {
    margin-left: auto;
    width: 433px;
    position: relative;
}

.hscroll .nav {
    position: absolute;
}

.hscroll .prev {
    left: 2px;
    top: 3px;
}

.hscroll .next {
    right: 17px;
    top: 3px;
}

.hthumb {
    position: absolute;
    right: 24px;
    top: 1px;
    width: 13px;
    height: 10px;
    background: #ccc;
}

/* command window */
.command {
    height: 25px;
    display: flex;
    background: #c4c4c4;
    border-top: 2px solid #707070;
    border-bottom: 1px solid #777;
}

.cmd-rail {
    width: 16px;
    flex: none;
    background: #6b6b6b;
    color: #eee;
    font-weight: bold;
    font-size: 11px;
    text-align: center;
    display: flex;
    align-items: flex-end;
    justify-content: center;
    padding-bottom: 1px;
}

.cmd-log {
    padding: 1px 0 0 2px;
    font-size: 9px;
    line-height: 10.500px;
    color: #2c2c2c;
}

.cmd-input {
    height: 16px;
    display: flex;
    align-items: center;
    gap: 3px;
    background: #fff;
    font-size: 9px;
    color: #999;
}

.wrench {
    height: 100%;
    align-items: center;
    padding: 0;
}

.prompt-icon {
    width: 12px;
    height: 12px;
    border: 1px solid #bbb;
    background: #eee;
    font-size: 7px;
    line-height: 10px;
    text-align: center;
}

.prompt {
    margin-left: 5px;
}

/* status bar */
.statusbar {
    height: 17px;
    display: flex;
    align-items: center;
    background: linear-gradient(#6e6e6e, #8e8a8e 40%, #96969a);
    border-top: 1px solid #555;
    border-bottom: 1px solid #123;
    font-size: 9px;
    color: #222;
}

.coords {
    width: 159px;
    flex: none;
    padding-left: 7px;
    font-family: 'Liberation Mono', monospace;
    font-size: 8.500px;
    color: #333;
    white-space: nowrap;
}

.toggles {
    display: flex;
    height: 100%;
    flex: none;
}

.toggle {
    display: block;
    text-align: center;
    line-height: 15px;
    font-family: 'Liberation Serif', 'Noto Sans CJK SC', serif;
    font-size: 8.500px;
    font-weight: bold;
    color: #1c1c1c;
    background: #aaa;
    border-left: 1px solid #6a6a6a;
    white-space: nowrap;
}

.toggle.latin {
    font-family: 'Liberation Mono', monospace;
    font-size: 7px;
}

.toggle.on {
    background: #c0dce8;
}

.w12 { width: 12px; }
.w13 { width: 13px; }
.w18 { width: 18px; }
.w20 { width: 20px; }
.w21 { width: 21px; }
.w23 { width: 23px; }
.w33 { width: 33px; }
.w37 { width: 37px; }

.status-tools {
    margin-left: auto;
    display: flex;
    align-items: center;
    gap: 3px;
    padding-right: 16px;
    height: 100%;
}

.model-btn {
    width: 19px;
    font-weight: bold;
    line-height: 15px;
    text-align: center;
    background: #a4a4a4;
}

.status-tools .ico {
    width: 12px;
    height: 12px;
}

.anno-group {
    display: flex;
    align-items: center;
    gap: 3px;
    margin-left: 5px;
    height: 100%;
    background: #a4a4a4;
}

.anno-group.first {
    margin-left: 10px;
}

.scale {
    font-size: 9px;
    color: #444;
}

.baidu-pop {
    position: absolute;
    left: 1110px;
    top: 15px;
    width: 72px;
    height: 18px;
    display: flex;
    background: #d4e4fb;
    border: 1px solid #cfe0f6;
    font-size: 8px;
    line-height: 16px;
    color: #6a8ac0;
}

.baidu-icon {
    width: 20px;
    height: 100%;
    background: #4a8cef;
    margin-right: 9px;
    display: flex;
    align-items: center;
    justify-content: center;
}

.logo16 {
    width: 14px;
    height: 14px;
    fill: none;
}
```
